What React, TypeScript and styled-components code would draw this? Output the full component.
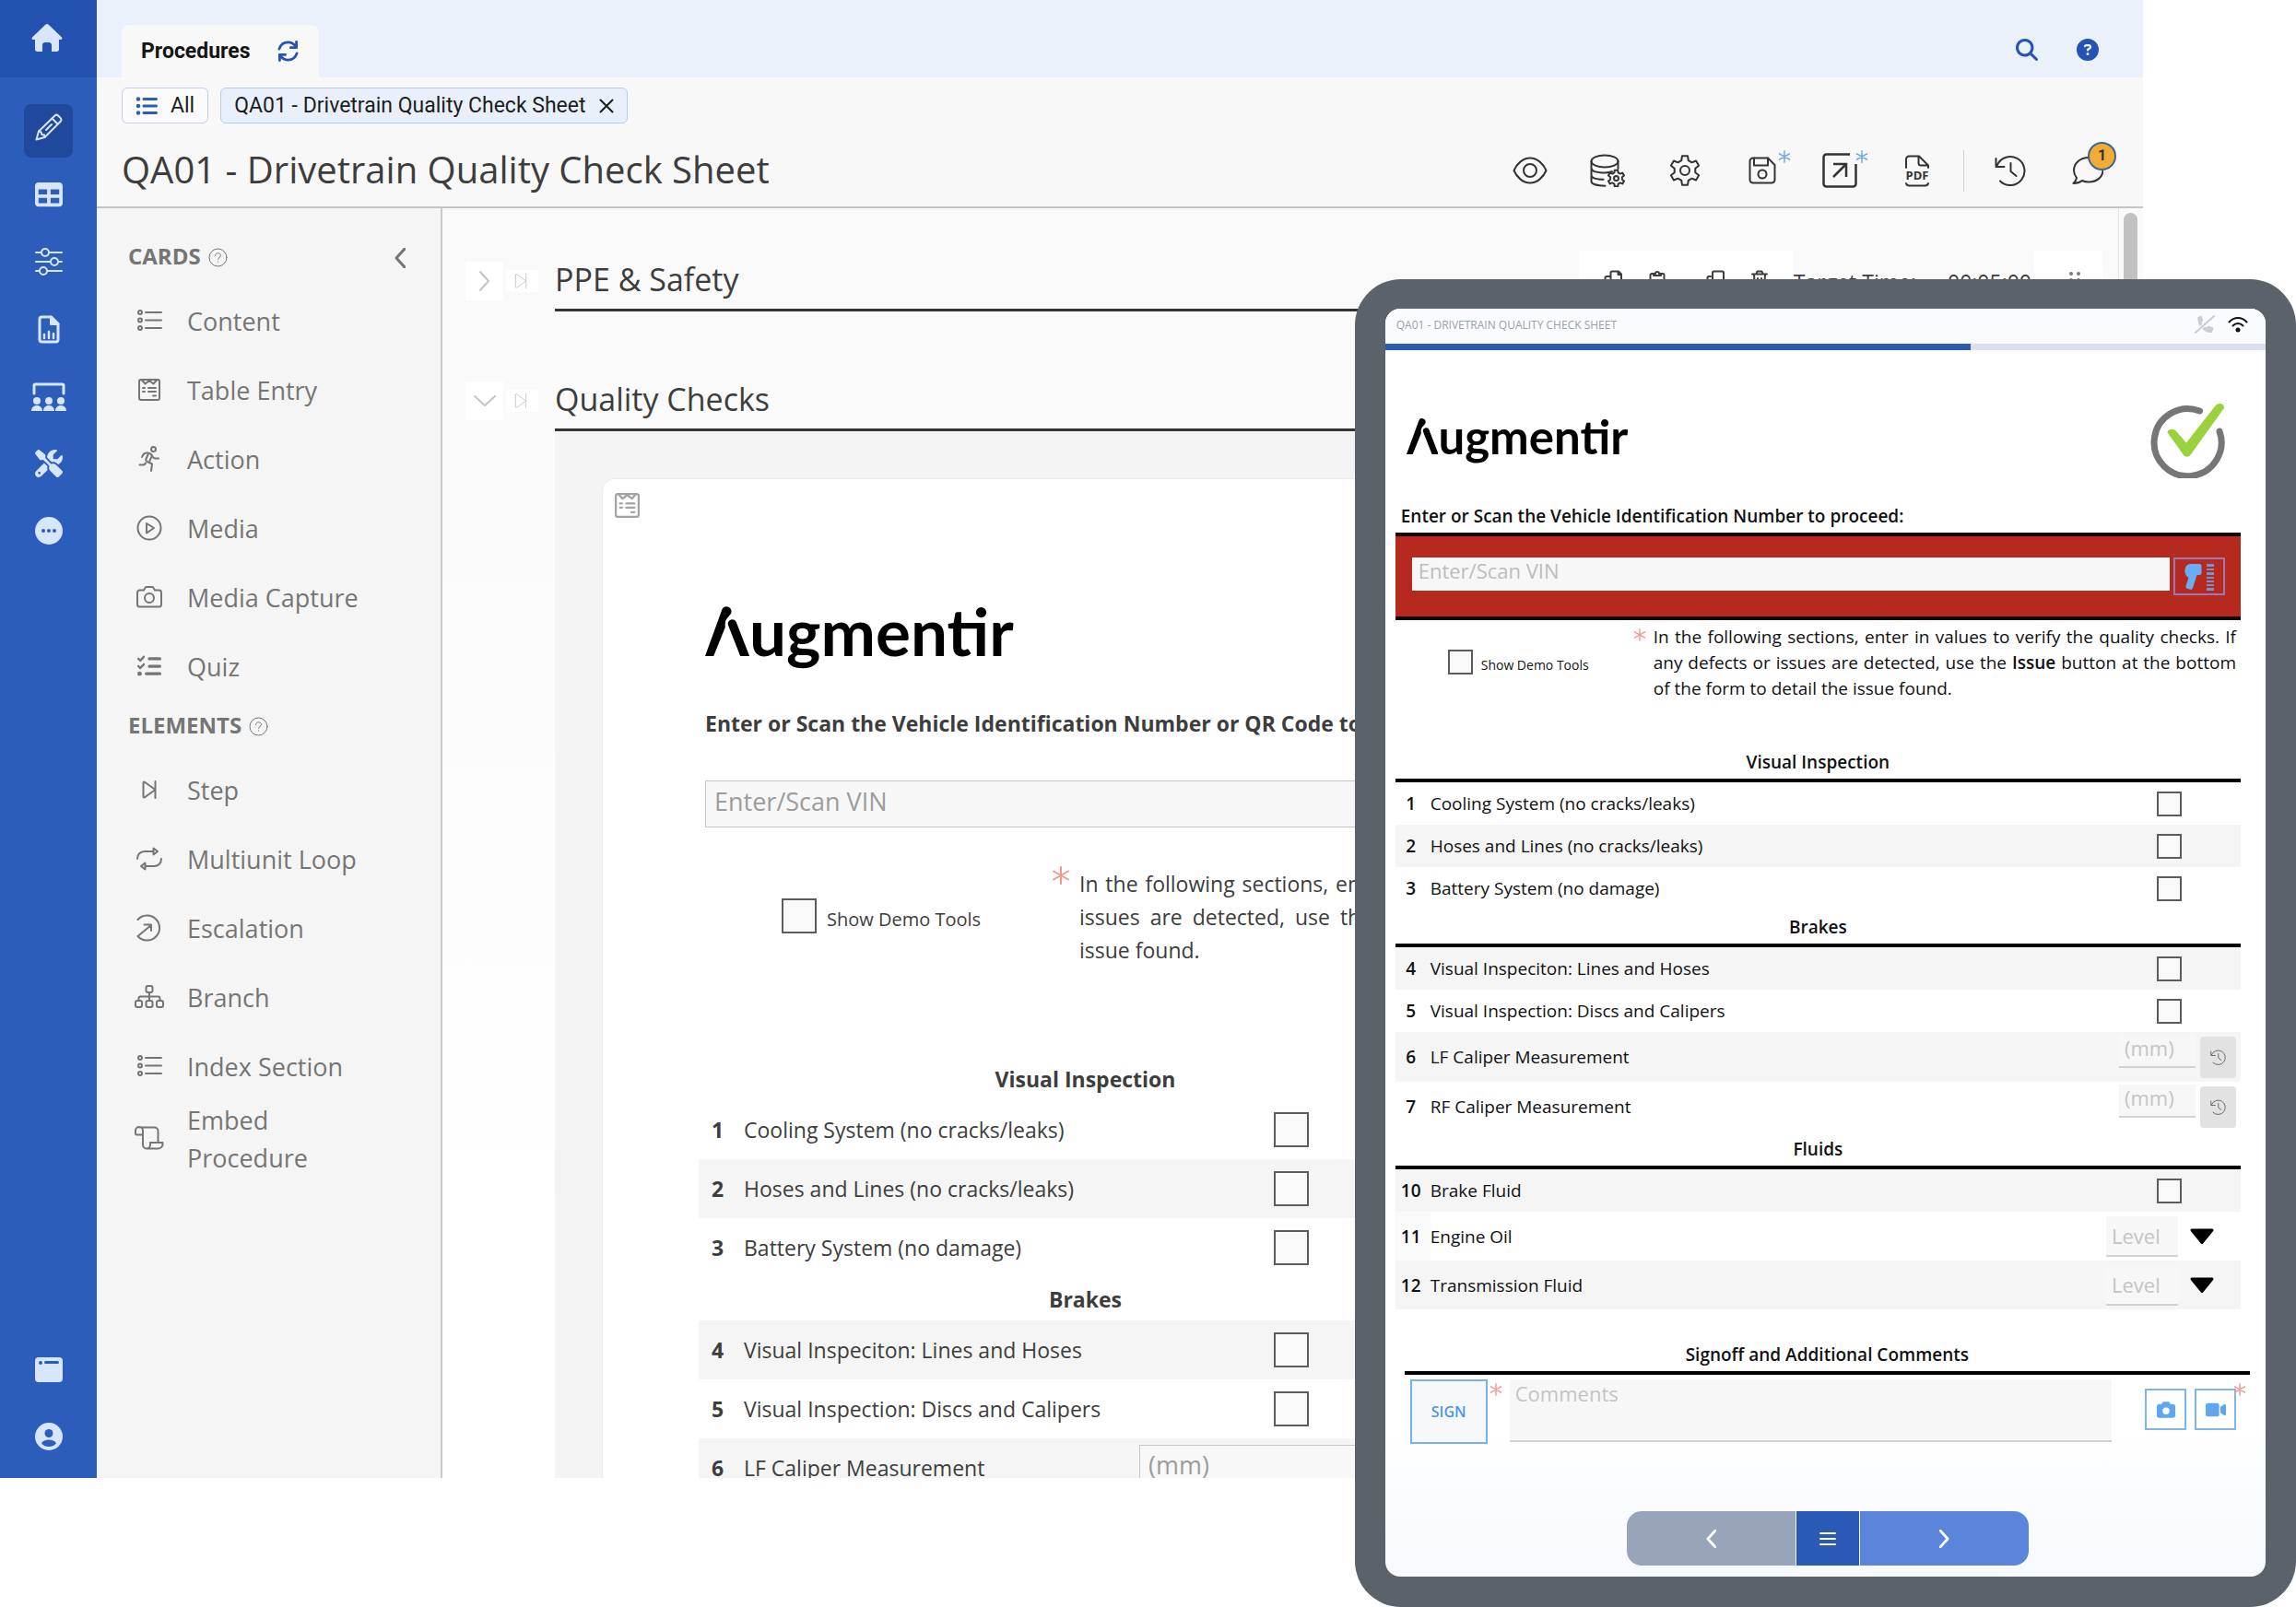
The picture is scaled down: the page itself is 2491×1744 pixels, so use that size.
import React from 'react';
import styled, { createGlobalStyle, css } from 'styled-components';
import {
  FaCamera,
  FaCircleQuestion,
  FaListCheck,
  FaListUl,
  FaMagnifyingGlass,
  FaScrewdriverWrench,
  FaTable,
  FaVideo,
} from 'react-icons/fa6';

const sans = `'Open Sans', 'Noto Sans', sans-serif`;
const roboto = `Roboto, 'Liberation Sans', sans-serif`;

const GlobalStyle = createGlobalStyle`
  *, *::before, *::after { box-sizing: border-box; }
  body { margin: 0; background: #ffffff; font-family: ${sans}; color: #3d3d3d; }
  button { font: inherit; color: inherit; padding: 0; border: 0; background: none; cursor: pointer; }
  h1, h2, h3, p, ul { margin: 0; padding: 0; }
  svg { display: block; flex: none; }
`;

/* ---------- icons ---------- */

type IconProps = { w: number; h?: number; box?: string; sw?: number; children: React.ReactNode };

const Line = ({ w, h = w, box, sw = 2, children }: IconProps) => (
  <svg
    width={w}
    height={h}
    viewBox={box ?? `0 0 ${w} ${h}`}
    fill="none"
    stroke="currentColor"
    strokeWidth={sw}
    strokeLinecap="round"
    strokeLinejoin="round"
    aria-hidden="true"
  >
    {children}
  </svg>
);

const gearPath = (cx: number, cy: number, outer: number, inner: number) => {
  const at = (deg: number, r: number) => {
    const a = (deg * Math.PI) / 180;
    return `${(cx + r * Math.cos(a)).toFixed(2)} ${(cy + r * Math.sin(a)).toFixed(2)}`;
  };
  const points: string[] = [];
  for (let tooth = 0; tooth < 6; tooth += 1) {
    const mid = -90 + tooth * 60;
    points.push(at(mid - 19, inner), at(mid - 11, outer), at(mid + 11, outer), at(mid + 19, inner));
  }
  return `M${points.join('L')}Z`;
};

const HomeIcon = () => (
  <svg width="34" height="30" viewBox="0 0 34 30" fill="currentColor" aria-hidden="true">
    <path d="M17 0c.7 0 1.200.2 1.700.7L33 14.500c1 1 .4 2.500-1 2.500h-2v10.500c0 1.400-1.100 2.500-2.500 2.500H22v-7c0-1.700-1.300-3-3-3h-4c-1.700 0-3 1.300-3 3v7H6.500C5.100 30 4 28.900 4 27.500V17H2c-1.400 0-2-1.500-1-2.500L15.300.7C15.800.2 16.300 0 17 0z" />
  </svg>
);
const PencilIcon = () => (
  <Line w={30} sw={2}>
    <path d="M1.500 28.500 4 19.500 21.500 2.500c1-1 2.600-1 3.600 0l2.600 2.600c1 1 1 2.600 0 3.600L10.500 26Z" />
    <path d="m4 19.500 2.500.7.800 2.800 2.800.6.500 2.400M18.500 5.500l6 6M12 18l6-6" />
  </Line>
);
const SlidersIcon = () => (
  <Line w={30} sw={2}>
    <path d="M1 5h6m8 0h14M1 15h16m8 0h4M1 25h4m8 0h16" />
    <circle cx="11" cy="5" r="4" />
    <circle cx="21" cy="15" r="4" />
    <circle cx="9" cy="25" r="4" />
  </Line>
);
const ReportIcon = () => (
  <Line w={24} h={31} sw={3}>
    <path d="M4.500 2h10L22 9.500v17a2.500 2.500 0 0 1-2.500 2.500h-15A2.500 2.500 0 0 1 2 26.500v-22A2.500 2.500 0 0 1 4.500 2z" />
    <path d="M14.500 2v7.500H22z" fill="currentColor" />
    <path d="M7 21v4M12 18v7M17 20v5" strokeWidth="2.500" />
  </Line>
);
const ClassIcon = () => (
  <Line w={38} h={31} sw={3}>
    <path d="M3 12V3.500C3 2.500 3.500 2 4.500 2h29c1 0 1.500.5 1.500 1.500V12" />
    <g fill="currentColor" stroke="none">
      <circle cx="6" cy="20" r="4" />
      <circle cx="19" cy="20" r="4" />
      <circle cx="32" cy="20" r="4" />
      <path d="M0 31c0-3.500 2.500-6 6-6s6 2.500 6 6zM13 31c0-3.500 2.500-6 6-6s6 2.500 6 6zM26 31c0-3.500 2.500-6 6-6s6 2.500 6 6z" />
    </g>
  </Line>
);
const MoreIcon = () => (
  <svg width="30" height="30" viewBox="0 0 30 30" aria-hidden="true">
    <circle cx="15" cy="15" r="15" fill="currentColor" />
    <g fill="#2d5dba">
      <circle cx="9" cy="15" r="2" />
      <circle cx="15" cy="15" r="2" />
      <circle cx="21" cy="15" r="2" />
    </g>
  </svg>
);
const WindowIcon = () => (
  <svg width="30" height="27" viewBox="0 0 30 27" aria-hidden="true">
    <rect width="30" height="27" rx="4" fill="currentColor" />
    <circle cx="6" cy="6" r="2" fill="#2d5dba" />
    <rect x="10" y="4" width="16" height="3" rx="1.500" fill="#2d5dba" />
  </svg>
);
const UserIcon = () => (
  <svg width="30" height="30" viewBox="0 0 30 30" aria-hidden="true">
    <circle cx="15" cy="15" r="15" fill="currentColor" />
    <circle cx="15" cy="11.500" r="4.500" fill="#2d5dba" />
    <path d="M7 22.500c1.500-3 4.500-4 8-4s6.500 1 8 4c-2 2.500-5 3.500-8 3.500s-6-1-8-3.500z" fill="#2d5dba" />
  </svg>
);
const RefreshIcon = () => (
  <Line w={23} box="0 0 24 24" sw={3}>
    <path d="M2 9.500C3.500 5 7.500 2 12 2c3.500 0 6.500 1.700 8.500 4.500M22 14.500C20.500 19 16.500 22 12 22c-3.500 0-6.500-1.700-8.500-4.500" />
    <path d="M21.500 1.500v6.500H15M2.500 22.500V16H9" />
  </Line>
);
const CloseIcon = () => (
  <Line w={16} sw={2}>
    <path d="m1.500 1.500 13 13m0-13-13 13" />
  </Line>
);
const EyeIcon = () => (
  <Line w={38} h={30} sw={2}>
    <path d="M1.500 15C4.500 8 11 1.500 19 1.500S33.500 8 36.500 15C33.500 22 27 28.500 19 28.500S4.500 22 1.500 15z" />
    <circle cx="19" cy="15" r="7" />
  </Line>
);
const DatabaseIcon = () => (
  <Line w={38} h={36} sw={2}>
    <ellipse cx="16" cy="8" rx="14.500" ry="6.500" />
    <path d="M1.500 8v22c0 2.500 6 4.500 15 4.800M30.500 8v8M1.500 15c0 3.500 6 5.500 15 5.500M1.500 23c0 3 5 4.600 13 4.800M16 20.500c3.500 0 6-.5 8-1.200" />
    <path d={gearPath(28.5, 26.5, 9, 6.5)} />
    <circle cx="28.500" cy="26.500" r="2.500" />
  </Line>
);
const GearIcon = () => (
  <Line w={34} h={34} sw={2}>
    <path d={gearPath(17, 17, 16, 11.5)} />
    <circle cx="17" cy="17" r="5" />
  </Line>
);
const SaveIcon = () => (
  <Line w={30} sw={2}>
    <path d="M5 1.500h16l7.500 7.500V25a3.500 3.500 0 0 1-3.500 3.500H5A3.500 3.500 0 0 1 1.500 25V5A3.500 3.500 0 0 1 5 1.500z" />
    <path d="M6 1.500V9.500h15V1.500" />
    <circle cx="15" cy="19" r="4.500" />
  </Line>
);
const PublishIcon = () => (
  <Line w={38} sw={2.5}>
    <path d="M30 1.500H4.500a3 3 0 0 0-3 3v29a3 3 0 0 0 3 3h29a3 3 0 0 0 3-3V12" strokeLinecap="butt" />
    <path d="M12 26 26 12M12 12h14v14" strokeLinecap="butt" strokeLinejoin="miter" />
  </Line>
);
const PdfGlyph = styled.text`
  font: 700 13px 'Open Sans', sans-serif;
  fill: currentColor;
  stroke: none;
`;
const PdfIcon = () => (
  <Line w={28} h={35} sw={2}>
    <path d="M2 14V5a3.500 3.500 0 0 1 3.500-3.500H16L26 11.500V14M15.500 1.500V9c0 1.500 1 2.500 2.500 2.500h8M2 31c.5 1.800 1.500 2.500 3.500 2.500h17c2 0 3-.7 3.500-2.500" />
    <PdfGlyph x="14" y="27" textAnchor="middle">PDF</PdfGlyph>
  </Line>
);
const HistoryIcon = ({ size = 34 }: { size?: number }) => (
  <Line w={size} box="0 0 34 34" sw={2}>
    <path d="M1.500 4v9h9M2.500 12A15.500 15.500 0 1 1 6 28.500" />
    <path d="M17.500 9v9l6 5" />
  </Line>
);
const ChatIcon = () => (
  <Line w={34} h={32} sw={2}>
    <path d="M18 2C9 2 2 8 2 16c0 3 1 5.500 3 8-.5 2.500-2 4.500-3.500 6 4 0 7-1 9.500-3 2 1 4.500 1.500 7 1.500 9 0 15.500-5.500 15.500-12.500S27 2 18 2z" />
  </Line>
);
const HelpOutline = () => (
  <Line w={21} sw={1}>
    <circle cx="10.500" cy="10.500" r="9.500" />
    <path d="M7.500 8.500c0-1.700 1.300-2.700 3-2.700s3 1 3 2.600c0 2-3 2-3 4M10.500 14.800v.3" />
  </Line>
);
const ChevronIcon = ({ dir, w = 12, sw = 3 }: { dir: 'left' | 'right' | 'down'; w?: number; sw?: number }) =>
  dir === 'down' ? (
    <Line w={w * 2} h={w} box="0 0 24 12" sw={sw}>
      <path d="m1 1 11 10L23 1" />
    </Line>
  ) : (
    <Line w={w} h={w * 2 - 2} box="0 0 12 22" sw={sw}>
      <path d={dir === 'left' ? 'M11 1 2 11l9 10' : 'm1 1 9 10-9 10'} />
    </Line>
  );

const BulletsIcon = () => (
  <Line w={27} h={23} sw={2}>
    <circle cx="3" cy="3" r="2" />
    <circle cx="3" cy="11.500" r="2" />
    <circle cx="3" cy="20" r="2" />
    <path d="M9 3h17M9 11.500h17M9 20h17" />
  </Line>
);
const TableEntryIcon = ({ w = 24 }: { w?: number }) => (
  <Line w={w} box="0 0 24 24" sw={2}>
    <rect x="1" y="1" width="22" height="22" rx="2" />
    <path d="M4 1.500 7.500 5.500 12 2l4.500 3.500L20 1.500" />
    <path d="M5 10h2M11 10h8M5 14h2M11 14h8M16 18.500h3" />
  </Line>
);
const RunIcon = () => (
  <Line w={24} h={28} sw={2}>
    <circle cx="16.500" cy="3.500" r="2.500" />
    <path d="M4 12c1-3 3-4.500 5.500-4.500 3 0 4.500.8 5.500 3 .8 2 2 3 3.500 3H22M11 8.500 8.500 14c-.6 1.300 0 2.300 1.200 3l5.300 2.500L14 27M14.500 11.500 12.500 16M1.500 20.500h4c1.200 0 1.800-.6 2.500-2" />
  </Line>
);
const PlayIcon = () => (
  <Line w={28} sw={2}>
    <circle cx="14" cy="14" r="12.500" />
    <path d="m11 9 8 5-8 5.500z" />
  </Line>
);
const CameraOutline = () => (
  <Line w={28} h={24} sw={2}>
    <path d="M3.500 4.500H8l1.500-2.600c.3-.6.8-.9 1.500-.9h6c.7 0 1.200.3 1.500.9L20 4.500h4.500A2.500 2.500 0 0 1 27 7v13a2.500 2.500 0 0 1-2.500 2.500h-21A2.500 2.500 0 0 1 1 20V7a2.500 2.500 0 0 1 2.500-2.500z" />
    <circle cx="14" cy="13" r="5" />
  </Line>
);
const StepIcon = ({ w = 16, sw = 2 }: { w?: number; sw?: number }) => (
  <Line w={w} h={w + 4} box="0 0 16 20" sw={sw}>
    <path d="M1.500 2.500v15c0 .8.800 1.200 1.500.7l10.500-7.500c.6-.4.600-1 0-1.400L3 1.800c-.7-.5-1.500-.1-1.500.7zM14.500 1v18" />
  </Line>
);
const LoopIcon = () => (
  <Line w={28} h={26} sw={2}>
    <path d="M1 13C1 8.500 4 5 9 5h9M27 13c0 4.500-3 8-8 8h-9" />
    <path d="M18.500 1.500v7L23 5zM9.500 17.500v7L5 21z" />
  </Line>
);
const EscalationIcon = () => (
  <Line w={30} sw={2}>
    <path d="M2.500 6A13.500 13.500 0 1 1 2.500 24M2.500 24 17 12M9.500 11.500H17V18" />
  </Line>
);
const BranchIcon = () => (
  <Line w={32} h={25} sw={2}>
    <rect x="12.500" y="1" width="7" height="7" rx="2" />
    <rect x="1" y="17" width="7" height="7" rx="2" />
    <rect x="12.500" y="17" width="7" height="7" rx="2" />
    <rect x="24" y="17" width="7" height="7" rx="2" />
    <path d="M16 8v9M4.500 17v-2.500a2 2 0 0 1 2-2h19a2 2 0 0 1 2 2V17" />
  </Line>
);
const ScrollIcon = () => (
  <Line w={32} h={26} sw={2}>
    <path d="M8 9.500H2.500A1.500 1.500 0 0 1 1 8V5a4 4 0 0 1 8 0v15.500a4 4 0 0 0 8 0V18h13.500c.5 4-1.500 6.500-5 6.500H13M5 1.500h16.500A4 4 0 0 1 25.500 5.500V18" />
  </Line>
);
const StarMark = ({ size }: { size: number }) => (
  <Line w={size} box="0 0 20 20" sw={2}>
    <path d="M10 1v18M2 5.500l16 9M18 5.500l-16 9" />
  </Line>
);
const CopyFileIcon = () => (
  <Line w={20} h={22} sw={2}>
    <path d="M9 1.500h7l3 3V15a1.500 1.500 0 0 1-1.500 1.500H9A1.500 1.500 0 0 1 7.500 15V3A1.500 1.500 0 0 1 9 1.500zM15.500 1.500V5H19M7 7H3a1.500 1.500 0 0 0-1.500 1.500v10A1.500 1.500 0 0 0 3 20h8" />
  </Line>
);
const ClipboardIcon = () => (
  <Line w={18} h={22} sw={2}>
    <path d="M5 4H3a1.500 1.500 0 0 0-1.500 1.500V19A1.500 1.500 0 0 0 3 20.500h12a1.500 1.500 0 0 0 1.500-1.500V5.500A1.500 1.500 0 0 0 15 4h-2M5 6V4h2a2 2 0 0 1 4 0h2v2z" />
  </Line>
);
const DuplicateIcon = () => (
  <Line w={20} h={22} sw={2}>
    <rect x="7" y="1.500" width="12" height="13" rx="1.500" />
    <path d="M5 7H3a1.500 1.500 0 0 0-1.500 1.500v10A1.500 1.500 0 0 0 3 20h9a1.500 1.500 0 0 0 1.500-1.500V17" />
  </Line>
);
const TrashIcon = () => (
  <Line w={18} h={22} sw={2}>
    <path d="M1 4.500h16M5.500 4l1-2.500h5l1 2.500M3 4.500l.8 14.500c0 1 .7 1.500 1.500 1.500h7.400c.8 0 1.500-.5 1.500-1.500L15 4.500M7 9v8M11 9v8" />
  </Line>
);
const GripIcon = () => (
  <svg width="14" height="22" viewBox="0 0 14 22" fill="#7a7a7a" aria-hidden="true">
    {[4, 11, 18].map((y) => (
      <React.Fragment key={y}>
        <circle cx="3" cy={y} r="2" />
        <circle cx="11" cy={y} r="2" />
      </React.Fragment>
    ))}
  </svg>
);
const OfflineCallIcon = () => (
  <Line w={22} h={20} sw={1}>
    <path
      d="M4 2.500 7 1l2 4.500-2 2c1 3 3 5 6 6.500l2-2 5 2-1.500 4.500C11 19.500 2.500 11 4 2.500z"
      fill="currentColor"
    />
    <path d="M21 1 1 19" stroke="#fafbff" strokeWidth="4" />
    <path d="M21 1 1 19" strokeWidth="2" />
  </Line>
);
const WifiIcon = () => (
  <Line w={22} h={18} sw={2}>
    <path d="M1.500 6.500C7 .5 15 .5 20.500 6.500M5.500 10.500c3.200-3.300 7.800-3.300 11 0" />
    <circle cx="11" cy="15" r="1.500" fill="currentColor" />
  </Line>
);
const ScannerIcon = () => (
  <svg width="34" height="30" viewBox="0 0 34 30" fill="currentColor" aria-hidden="true">
    <path d="M2 5c1-2.500 3-4 6-4h9c1.500 0 2.500.8 2.500 2v8c0 1.200-1 2-2.500 2h-2.500L10 27c-.4 1.300-1.300 2-2.500 1.700l-3-.8C3 27.500 2 26.500 2.500 25l3-9C2 14 .5 9 2 5z" />
    <path
      d="M25 1h8v3h-8zM25 6h8v2h-8zM25 10h8v3h-8zM25 15h8v2h-8zM25 19h8v2h-8zM25 23h8v2h-8zM25 27h8v3h-8z"
      opacity="0.8"
    />
  </svg>
);
const ArrowDown = () => (
  <svg width="28" height="18" viewBox="0 0 28 18" aria-hidden="true">
    <path d="M3 2h22L14 15.500z" fill="#000" stroke="#000" strokeWidth="3" strokeLinejoin="round" />
  </svg>
);
const CheckBadge = () => (
  <svg width="82" height="82" viewBox="0 0 82 82" fill="none" aria-hidden="true">
    <path d="M54.500 9A36.500 36.500 0 1 0 76 31" stroke="#767676" strokeWidth="7" strokeLinecap="round" />
    <path
      d="M21 32c1-2.500 5-2.500 7 0l12 14L73 4c2-2.500 6.500-2 6.500 1.500L44 55c-2 3-5 3-6.500 0z"
      fill="#9bd13c"
      stroke="#9bd13c"
      strokeWidth="3"
      strokeLinejoin="round"
    />
  </svg>
);

/* ---------- brand ---------- */

const Brand = styled.div<{ $compact?: boolean }>`
  display: flex;
  align-items: baseline;
  color: #000;
  font-family: Lato, sans-serif;
  font-weight: 700;
  font-size: ${(p) => (p.$compact ? 51 : 71)}px;
  line-height: ${(p) => (p.$compact ? 40 : 55)}px;
  padding-bottom: ${(p) => (p.$compact ? 8 : 15)}px;
  svg { height: ${(p) => (p.$compact ? 39 : 54)}px; width: auto; }
`;
const Logo = ({ compact }: { compact?: boolean }) => (
  <Brand $compact={compact} role="img" aria-label="Augmentir">
    <svg viewBox="30 50 146 164" fill="#000" aria-hidden="true">
      <path d="M30 214 86 60a16 16 0 1 1 29 14L102 90c-6 7-6 14-6 24v6L58 214z" />
      <path d="M106 112a14 14 0 0 1 27-9l43 111h-30z" />
    </svg>
    <span>ugmentir</span>
  </Brand>
);

/* ---------- frame ---------- */

const Scene = styled.div`
  position: relative;
  min-height: 100vh;
  display: flex;
  flex-direction: column;
`;
const Desktop = styled.div`
  display: flex;
  width: calc(100% - 166px);
  height: calc(100vh - 140px);
  overflow: hidden;
`;
const Rail = styled.nav`
  flex: 0 0 105px;
  display: flex;
  flex-direction: column;
  background: #2d5dba;
  color: #d8e6fd;
`;
const RailHome = styled.a`
  height: 84px;
  display: flex;
  align-items: center;
  justify-content: center;
  padding: 0 3px 2px 0;
  background: #2351b0;
  color: inherit;
  margin-bottom: 29px;
`;
const RailGroup = styled.div<{ $bottom?: boolean }>`
  display: flex;
  flex-direction: column;
  align-items: center;
  gap: 15px;
  ${(p) => p.$bottom && css`
    margin-top: auto;
    padding-bottom: 12px;
  `}
`;
const RailLink = styled.a<{ $active?: boolean }>`
  width: 53px;
  height: 58px;
  padding-bottom: 8px;
  border-radius: 8px;
  display: flex;
  align-items: center;
  justify-content: center;
  color: inherit;
  background: ${(p) => (p.$active ? '#20489c' : 'transparent')};
`;
const Workspace = styled.div`
  flex: 1;
  min-width: 0;
  display: flex;
  flex-direction: column;
  background: #f8f8f8;
`;
const TopBar = styled.header`
  flex: none;
  display: flex;
  justify-content: space-between;
  align-items: flex-end;
  height: 84px;
  padding: 0 48px 0 27px;
  background: #eaf1fa;
`;
const Tab = styled.div`
  display: flex;
  align-items: center;
  gap: 29px;
  height: 57px;
  padding: 0 22px 0 21px;
  border-radius: 8px 8px 0 0;
  background: #f8f8f8;
  font: 700 23px ${roboto};
  color: #151515;
  button { color: #2453b5; }
`;
const TopActions = styled.div`
  display: flex;
  align-items: center;
  gap: 42px;
  height: 60px;
  color: #2453b5;
`;
const TitleArea = styled.div`
  flex: none;
  padding: 11px 38px 9px 27px;
  border-bottom: 2px solid #c4c4c4;
`;
const Chips = styled.div`
  display: flex;
  gap: 13px;
`;
const Chip = styled.button<{ $selected?: boolean }>`
  display: flex;
  align-items: center;
  gap: 14px;
  height: 39px;
  padding: 0 14px;
  border: 1px solid ${(p) => (p.$selected ? '#b9cbea' : '#c3cfe6')};
  border-radius: 6px;
  background: ${(p) => (p.$selected ? '#e9f0fb' : '#fbfbfb')};
  font: 400 23px ${roboto};
  color: #1d1d1d;
`;
const BlueMark = styled.span`
  display: flex;
  color: #2d5dba;
`;
const TitleRow = styled.div`
  display: flex;
  align-items: center;
  justify-content: space-between;
  margin-top: 21px;
  height: 60px;
`;
const PageTitle = styled.h1`
  font-size: 40px;
  font-weight: 400;
  line-height: 58px;
  padding-bottom: 2px;
  white-space: nowrap;
`;
const Toolbar = styled.div`
  display: flex;
  align-items: center;
  color: #333;
`;
const ToolGroup = styled.div`
  display: flex;
  gap: 40px;
`;
const Divider = styled.span`
  width: 1px;
  height: 45px;
  margin: 0 28px;
  background: #cfcfcf;
`;
const Tool = styled.button`
  position: relative;
  width: 44px;
  height: 44px;
  display: flex;
  align-items: center;
  justify-content: center;
`;
const ToolStar = styled.span`
  position: absolute;
  top: 0;
  right: -9px;
  color: #5fa3ee;
`;
const CountBadge = styled.span`
  position: absolute;
  top: -9px;
  right: -9px;
  width: 31px;
  height: 31px;
  border-radius: 50%;
  border: 2px solid #3c6494;
  background: #f2ab35;
  font: 700 16px/26px ${roboto};
  text-align: center;
`;
const Body = styled.div`
  flex: 1;
  min-height: 0;
  display: flex;
`;

/* ---------- card palette ---------- */

const Palette = styled.aside`
  flex: 0 0 375px;
  padding: 26px 30px 0 34px;
  background: #f5f5f5;
  border-right: 2px solid #c9c9c9;
  color: #757575;
`;
const PaletteHead = styled.div`
  display: flex;
  align-items: center;
  gap: 8px;
  height: 36px;
  margin: 9px 0 14px;
  h2 { font-size: 24px; font-weight: 700; line-height: 34px; padding-bottom: 2px; }
  > button:last-child { margin-left: auto; padding: 2px 8px 0; }
`;
const PaletteList = styled.ul`
  list-style: none;
`;
const PaletteItem = styled.button`
  display: grid;
  grid-template-columns: 46px 200px;
  align-items: center;
  gap: 18px;
  height: 75px;
  font-size: 27px;
  line-height: 41px;
  text-align: left;
  > span:first-child { display: flex; justify-content: center; padding-bottom: 2px; }
`;

/* ---------- editor ---------- */

const Editor = styled.main`
  flex: 1;
  min-width: 0;
  display: flex;
  flex-direction: column;
  gap: 64px;
  padding: 46px 17px 0 25px;
  background: linear-gradient(#f9f9f9, #ffffff 80%);
  overflow: hidden;
`;
const Section = styled.section`
  display: grid;
  grid-template-columns: 97px minmax(0, 1fr);
`;
const SectionHandles = styled.div`
  display: flex;
  align-items: center;
  gap: 3px;
  height: 66px;
  color: #c4c4c4;
`;
const Handle = styled.button<{ $small?: boolean }>`
  display: flex;
  align-items: center;
  justify-content: center;
  width: ${(p) => (p.$small ? 35 : 41)}px;
  height: ${(p) => (p.$small ? 24 : 42)}px;
  padding-right: ${(p) => (p.$small ? 4 : 0)}px;
  background: #fff;
`;
const SectionHead = styled.div`
  display: flex;
  align-items: center;
  height: 66px;
  border-bottom: 3px solid #343434;
  h2 { flex: 1; font-size: 34px; font-weight: 400; padding-bottom: 2px; white-space: nowrap; }
`;
const SectionTools = styled.div`
  display: flex;
  align-items: center;
  width: 233px;
  height: 63px;
  padding-left: 13px;
  background: #fff;
  button {
    display: flex;
    justify-content: center;
    width: 48px;
  }
  button:nth-child(3) { margin-left: 15px; }
`;
const TargetTime = styled.div`
  display: flex;
  gap: 34px;
  padding: 4px 2px 0 0;
  font-size: 23px;
`;
const DragBox = styled.button`
  width: 75px;
  height: 63px;
  display: flex;
  align-items: center;
  justify-content: center;
  padding-left: 14px;
  background: #fff;
`;
const SectionBody = styled.div`
  grid-column: 2;
  padding: 51px;
  background: #f4f4f4;
`;
const Card = styled.div`
  position: relative;
  padding: 137px 111px 200px;
  border: 1px solid #ececec;
  border-width: 1px 0 0 1px;
  border-radius: 14px;
  background: #fff;
`;
const CardKind = styled.span`
  position: absolute;
  top: 15px;
  left: 13px;
  color: #a3a3a3;
`;
const Scroller = styled.div`
  flex: 0 0 27px;
  padding: 5px 5px;
  border-left: 1px solid #e4e4e4;
  background: #fafafa;
`;
const Thumb = styled.div`
  height: 480px;
  width: 15px;
  border-radius: 8px;
  background: #c1c1c1;
`;

/* ---------- form parts used in both views ---------- */

const Check = styled.input.attrs({ type: 'checkbox' })<{ $large?: boolean }>`
  appearance: none;
  flex: none;
  display: block;
  margin: 0;
  width: ${(p) => (p.$large ? 38 : 27)}px;
  height: ${(p) => (p.$large ? 38 : 27)}px;
  border: 2px solid #5c5c5c;
  background: #f9f9f9;
`;
const FormPrompt = styled.label<{ $compact?: boolean }>`
  display: block;
  font-weight: ${(p) => (p.$compact ? 600 : 700)};
  font-size: ${(p) => (p.$compact ? 19 : 23)}px;
  line-height: ${(p) => (p.$compact ? 28 : 36)}px;
  margin: ${(p) => (p.$compact ? '28px 0 4px 6px' : '40px 0 44px')};
  white-space: nowrap;
`;
const VinInput = styled.input`
  display: block;
  width: 100%;
  height: 51px;
  padding: 0 9px 7px;
  border: 1px solid #c6c6c6;
  background: #f7f7f7;
  font: 400 27px ${sans};
  &::placeholder { color: #9c9c9c; opacity: 1; }
`;
const Guidance = styled.div<{ $compact?: boolean }>`
  display: grid;
  align-items: center;
  grid-template-columns: ${(p) => (p.$compact ? '280px minmax(0, 1fr)' : '406px minmax(0, 930px)')};
  margin: ${(p) => (p.$compact ? '4px 5px 0 0' : '43px 0 1px')};
`;
const DemoToggle = styled.label<{ $compact?: boolean }>`
  display: flex;
  align-items: center;
  gap: ${(p) => (p.$compact ? 9 : 11)}px;
  padding-left: ${(p) => (p.$compact ? 57 : 83)}px;
  padding-bottom: 2px;
  font-size: ${(p) => (p.$compact ? 14 : 20)}px;
  > span { padding-top: 6px; }
`;
const GuidanceText = styled.p<{ $compact?: boolean }>`
  position: relative;
  text-align: justify;
  font-size: ${(p) => (p.$compact ? 19 : 23)}px;
  line-height: ${(p) => (p.$compact ? 28 : 36)}px;
  b { font-weight: 600; }
`;
const KeepTogether = styled.span`
  white-space: nowrap;
`;
const RequiredMark = styled.span<{ $top: number; $left?: number; $right?: number }>`
  position: absolute;
  top: ${(p) => p.$top}px;
  ${(p) => (p.$left !== undefined ? `left: ${p.$left}px;` : `right: ${p.$right}px;`)}
  color: #f0988f;
`;
const Checklist = styled.table<{ $compact?: boolean }>`
  border-collapse: separate;
  border-spacing: 0;
  table-layout: fixed;
  width: ${(p) => (p.$compact ? '100%' : '839px')};
  margin: ${(p) => (p.$compact ? '47px 0 0' : '98px 0 0 -7px')};
  font-size: ${(p) => (p.$compact ? 19 : 23)}px;
  td, th { padding: 0; }
`;
const NumCol = styled.col<{ $compact?: boolean }>`
  width: ${(p) => (p.$compact ? 38 : 49)}px;
`;
const ControlCol = styled.col<{ $compact?: boolean }>`
  width: ${(p) => (p.$compact ? 154 : 361)}px;
`;
const GroupHead = styled.th<{ $compact?: boolean }>`
  height: ${(p) => (p.$compact ? 41 : 47)}px;
  font-weight: ${(p) => (p.$compact ? 600 : 700)};
  border-bottom: ${(p) => (p.$compact ? '4px solid #000' : '0')};
`;
const Row = styled.tr<{ $shaded?: boolean; $h: number; $numShaded?: boolean }>`
  height: ${(p) => p.$h}px;
  background: ${(p) => (p.$shaded ? '#f5f5f5' : 'transparent')};
  ${(p) => p.$numShaded && css`
    > th { background: #fafafa; }
  `}
`;
const Num = styled.th<{ $compact?: boolean }>`
  font-weight: ${(p) => (p.$compact ? 600 : 700)};
  text-align: center;
  > span { display: block; padding-right: ${(p) => (p.$compact ? 4 : 8)}px; }
`;
const Controls = styled.div<{ $end: number; $gap: number; $center?: boolean }>`
  display: flex;
  align-items: center;
  justify-content: ${(p) => (p.$center ? 'center' : 'flex-end')};
  gap: ${(p) => p.$gap}px;
  padding-right: ${(p) => p.$end}px;
`;
const WideMeasure = styled.input`
  width: 100%;
  height: 51px;
  padding: 0 9px 7px;
  border: 1px solid #c6c6c6;
  background: #f8f8f8;
  font: 400 27px ${sans};
  &::placeholder { color: #9c9c9c; opacity: 1; }
`;
const underlined = css`
  border: 0;
  border-bottom: 2px solid #d2d2d2;
  border-radius: 0;
  background: #f7f7f7;
  font: 400 22px ${sans};
  color: #c4c4c4;
  &::placeholder { color: #c4c4c4; opacity: 1; }
`;
const SmallMeasure = styled.input`
  ${underlined}
  width: 83px;
  height: 36px;
  padding: 0 6px 6px;
  margin-bottom: 12px;
`;
const HistoryButton = styled.button`
  width: 39px;
  height: 45px;
  border-radius: 4px;
  background: #e2e2e2;
  display: flex;
  align-items: center;
  justify-content: center;
  color: #6c6c6c;
`;
const LevelSelect = styled.select`
  ${underlined}
  appearance: none;
  width: 78px;
  height: 44px;
  padding: 0 6px;
`;

/* ---------- tablet ---------- */

const Tablet = styled.aside`
  position: absolute;
  top: 303px;
  right: 0;
  bottom: 0;
  width: 41%;
  min-width: 960px;
  padding: 32px 33px 33px;
  border-radius: 50px;
  background: #5b626a;
  display: flex;
`;
const Screen = styled.div`
  flex: 1;
  min-width: 0;
  display: flex;
  flex-direction: column;
  overflow: hidden;
  border-radius: 16px;
  background: linear-gradient(#ffffff 88%, #f6f9fe);
  color: #111;
`;
const StatusBar = styled.div`
  display: flex;
  align-items: center;
  justify-content: space-between;
  height: 38px;
  padding: 0 19px 4px 12px;
  background: #fafbff;
  font-size: 12px;
  color: #98a0ad;
  > div { display: flex; align-items: center; gap: 14px; color: #c9cdd6; }
`;
const Dark = styled.span`
  color: #111;
`;
const Progress = styled.div`
  height: 7px;
  background: #dcdfec;
  > div { height: 100%; background: #2d5ab4; }
`;
const Sheet = styled.div`
  padding: 58px 27px 0 11px;
`;
const BrandRow = styled.div`
  display: flex;
  align-items: center;
  justify-content: space-between;
  height: 80px;
  padding: 0 17px 0 12px;
`;
const VinBand = styled.div`
  display: flex;
  align-items: flex-start;
  gap: 4px;
  padding: 23px 17px 23px 18px;
  border: solid #120505;
  border-width: 4px 0;
  background: #b5291f;
`;
const VinField = styled.input`
  flex: 1;
  min-width: 0;
  height: 36px;
  padding: 0 7px 8px;
  border: 0;
  background: #f7f7f7;
  font: 400 22px ${sans};
  &::placeholder { color: #bdbdbd; opacity: 1; }
`;
const ScanButton = styled.button`
  width: 56px;
  height: 41px;
  border: 2px solid #9b79b4;
  display: flex;
  align-items: center;
  justify-content: center;
  color: #6aadf6;
`;
const Signoff = styled.section`
  margin: 30px 17px 0 21px;
  h3 {
    height: 41px;
    line-height: 38px;
    font-size: 19px;
    font-weight: 600;
    text-align: center;
    border-bottom: 4px solid #000;
  }
`;
const SignRow = styled.div`
  position: relative;
  display: flex;
  align-items: flex-start;
  padding: 5px 15px 0 6px;
`;
const SignButton = styled.button`
  width: 84px;
  height: 70px;
  border: 2px solid #76b2ec;
  background: #f7f8f9;
  font-size: 16px;
  font-weight: 600;
  color: #4b97e6;
`;
const Comments = styled.textarea`
  ${underlined}
  flex: 1;
  min-width: 0;
  height: 68px;
  margin: 0 36px 0 24px;
  padding: 0 6px;
  resize: none;
  outline: 0;
`;
const MediaButton = styled.button`
  width: 45px;
  height: 45px;
  margin: 10px 0 0;
  border: 2px solid #7db6ee;
  background: #fff;
  display: flex;
  align-items: center;
  justify-content: center;
  color: #5fa6ef;
  & + & { margin-left: 9px; }
`;
const StepNav = styled.div`
  display: flex;
  justify-content: center;
  gap: 1px;
  margin-top: auto;
  padding: 0 0 12px 5px;
  color: #fff;
`;
const StepButton = styled.button<{ $kind: 'prev' | 'menu' | 'next' }>`
  width: ${(p) => (p.$kind === 'menu' ? 68 : 183)}px;
  height: 59px;
  display: flex;
  align-items: center;
  justify-content: center;
  background: ${(p) => ({ prev: '#98a4ba', menu: '#2a59b8', next: '#5a85da' })[p.$kind]};
  border-radius: ${(p) => ({ prev: '16px 0 0 16px', menu: '0', next: '0 16px 16px 0' })[p.$kind]};
`;

/* ---------- data ---------- */

const railItems = [
  { name: 'Procedures', icon: <PencilIcon />, active: true },
  { name: 'Tables', icon: <FaTable size={30} /> },
  { name: 'Settings', icon: <SlidersIcon /> },
  { name: 'Reports', icon: <ReportIcon /> },
  { name: 'Teams', icon: <ClassIcon /> },
  { name: 'Tools', icon: <FaScrewdriverWrench size={30} /> },
  { name: 'More', icon: <MoreIcon /> },
];
const cards = [
  { name: 'Content', icon: <BulletsIcon /> },
  { name: 'Table Entry', icon: <TableEntryIcon /> },
  { name: 'Action', icon: <RunIcon /> },
  { name: 'Media', icon: <PlayIcon /> },
  { name: 'Media Capture', icon: <CameraOutline /> },
  { name: 'Quiz', icon: <FaListCheck size={26} /> },
];
const elements = [
  { name: 'Step', icon: <StepIcon /> },
  { name: 'Multiunit Loop', icon: <LoopIcon /> },
  { name: 'Escalation', icon: <EscalationIcon /> },
  { name: 'Branch', icon: <BranchIcon /> },
  { name: 'Index Section', icon: <BulletsIcon /> },
  { name: 'Embed Procedure', icon: <ScrollIcon /> },
];

type Kind = 'check' | 'measure' | 'level';
type Item = { n: number; label: string; kind: Kind; shaded?: boolean };
type Group = { title: string; items: Item[] };

const inspection: Group = {
  title: 'Visual Inspection',
  items: [
    { n: 1, label: 'Cooling System (no cracks/leaks)', kind: 'check' },
    { n: 2, label: 'Hoses and Lines (no cracks/leaks)', kind: 'check', shaded: true },
    { n: 3, label: 'Battery System (no damage)', kind: 'check' },
  ],
};
const brakes: Group = {
  title: 'Brakes',
  items: [
    { n: 4, label: 'Visual Inspeciton: Lines and Hoses', kind: 'check', shaded: true },
    { n: 5, label: 'Visual Inspection: Discs and Calipers', kind: 'check' },
    { n: 6, label: 'LF Caliper Measurement', kind: 'measure', shaded: true },
    { n: 7, label: 'RF Caliper Measurement', kind: 'measure' },
  ],
};
const fluids: Group = {
  title: 'Fluids',
  items: [
    { n: 10, label: 'Brake Fluid', kind: 'check', shaded: true },
    { n: 11, label: 'Engine Oil', kind: 'level' },
    { n: 12, label: 'Transmission Fluid', kind: 'level', shaded: true },
  ],
};

/* ---------- composed views ---------- */

const PaletteGroup = ({ title, items, closable }: { title: string; items: typeof cards; closable?: boolean }) => (
  <>
    <PaletteHead>
      <h2>{title}</h2>
      <HelpOutline />
      {closable && (
        <button aria-label="Collapse panel">
          <ChevronIcon dir="left" />
        </button>
      )}
    </PaletteHead>
    <PaletteList>
      {items.map((item) => (
        <li key={item.name}>
          <PaletteItem>
            <span>{item.icon}</span>
            <span>{item.name}</span>
          </PaletteItem>
        </li>
      ))}
    </PaletteList>
  </>
);

const SectionBlock = ({ title, open, children }: { title: string; open?: boolean; children?: React.ReactNode }) => (
  <Section>
    <SectionHandles>
      <Handle aria-label="Toggle section">
        <ChevronIcon dir={open ? 'down' : 'right'} sw={2} />
      </Handle>
      <Handle $small aria-label="Step">
        <StepIcon w={14} sw={1} />
      </Handle>
    </SectionHandles>
    <SectionHead>
      <h2>{title}</h2>
      <SectionTools>
        <button aria-label="Copy"><CopyFileIcon /></button>
        <button aria-label="Paste"><ClipboardIcon /></button>
        <button aria-label="Duplicate"><DuplicateIcon /></button>
        <button aria-label="Delete"><TrashIcon /></button>
      </SectionTools>
      <TargetTime>
        <span>Target Time:</span>
        <span>00:05:00</span>
      </TargetTime>
      <DragBox aria-label="Move section"><GripIcon /></DragBox>
    </SectionHead>
    {children && <SectionBody>{children}</SectionBody>}
  </Section>
);

const Control = ({ item, compact, id }: { item: Item; compact?: boolean; id: string }) => {
  if (item.kind === 'check') {
    return (
      <Controls $end={compact ? 64 : 30} $gap={0} $center={!compact}>
        <Check id={id} $large={!compact} />
      </Controls>
    );
  }
  if (item.kind === 'level') {
    return (
      <Controls $end={28} $gap={12}>
        <LevelSelect id={id} defaultValue="">
          <option value="">Level</option>
          <option value="low">Low</option>
          <option value="full">Full</option>
        </LevelSelect>
        <ArrowDown />
      </Controls>
    );
  }
  return compact ? (
    <Controls $end={5} $gap={5}>
      <SmallMeasure id={id} placeholder="(mm)" />
      <HistoryButton aria-label="Measurement history"><HistoryIcon size={17} /></HistoryButton>
    </Controls>
  ) : (
    <Controls $end={0} $gap={0}>
      <WideMeasure id={id} placeholder="(mm)" />
    </Controls>
  );
};

const compactHeights: Record<Kind, number> = { check: 46, measure: 54, level: 53 };

const FormTable = ({ groups, compact }: { groups: Group[]; compact?: boolean }) => (
  <Checklist $compact={compact}>
    <colgroup>
      <NumCol $compact={compact} />
      <col />
      <ControlCol $compact={compact} />
    </colgroup>
    {groups.map((group) => (
      <tbody key={group.title}>
        <tr>
          <GroupHead $compact={compact} colSpan={3}>{group.title}</GroupHead>
        </tr>
        {group.items.map((item) => {
          const id = `${compact ? 'tablet' : 'editor'}-item-${item.n}`;
          return (
            <Row
              key={item.n}
              $shaded={item.shaded}
              $numShaded={item.kind === 'level' && !item.shaded}
              $h={compact ? compactHeights[item.kind] : 64}
            >
              <Num $compact={compact} scope="row"><span>{item.n}</span></Num>
              <td><label htmlFor={id}>{item.label}</label></td>
              <td><Control item={item} compact={compact} id={id} /></td>
            </Row>
          );
        })}
      </tbody>
    ))}
  </Checklist>
);

const GuidanceBlock = ({ compact }: { compact?: boolean }) => (
  <Guidance $compact={compact}>
    <DemoToggle $compact={compact}>
      <Check $large={!compact} />
      <span>Show Demo Tools</span>
    </DemoToggle>
    <GuidanceText $compact={compact}>
      <RequiredMark $top={compact ? 5 : -1} $left={compact ? -22 : -30}>
        <StarMark size={compact ? 14 : 20} />
      </RequiredMark>
      In the following sections, enter in values to verify the quality checks. If any defects or issues are
      detected, use the <b>Issue</b> button at the bottom of the form to detail the{' '}
      <KeepTogether>issue found.</KeepTogether>
    </GuidanceText>
  </Guidance>
);

const DesktopApp = () => (
  <Desktop>
    <Rail aria-label="Main">
      <RailHome href="#home" aria-label="Home"><HomeIcon /></RailHome>
      <RailGroup>
        {railItems.map((item) => (
          <RailLink key={item.name} href={`#${item.name.toLowerCase()}`} aria-label={item.name} $active={item.active}>
            {item.icon}
          </RailLink>
        ))}
      </RailGroup>
      <RailGroup $bottom>
        <RailLink href="#windows" aria-label="Windows"><WindowIcon /></RailLink>
        <RailLink href="#account" aria-label="Account"><UserIcon /></RailLink>
      </RailGroup>
    </Rail>
    <Workspace>
      <TopBar>
        <Tab>
          Procedures
          <button aria-label="Refresh"><RefreshIcon /></button>
        </Tab>
        <TopActions>
          <button aria-label="Search"><FaMagnifyingGlass size={24} /></button>
          <button aria-label="Help"><FaCircleQuestion size={24} /></button>
        </TopActions>
      </TopBar>
      <TitleArea>
        <Chips>
          <Chip><BlueMark><FaListUl size={24} /></BlueMark>All</Chip>
          <Chip $selected>QA01 - Drivetrain Quality Check Sheet<CloseIcon /></Chip>
        </Chips>
        <TitleRow>
          <PageTitle>QA01 - Drivetrain Quality Check Sheet</PageTitle>
          <Toolbar>
            <ToolGroup>
              <Tool aria-label="Preview"><EyeIcon /></Tool>
              <Tool aria-label="Data settings"><DatabaseIcon /></Tool>
              <Tool aria-label="Settings"><GearIcon /></Tool>
              <Tool aria-label="Save"><SaveIcon /><ToolStar><StarMark size={14} /></ToolStar></Tool>
              <Tool aria-label="Publish"><PublishIcon /><ToolStar><StarMark size={14} /></ToolStar></Tool>
              <Tool aria-label="Export PDF"><PdfIcon /></Tool>
            </ToolGroup>
            <Divider />
            <ToolGroup>
              <Tool aria-label="History"><HistoryIcon /></Tool>
              <Tool aria-label="Comments"><ChatIcon /><CountBadge>1</CountBadge></Tool>
            </ToolGroup>
          </Toolbar>
        </TitleRow>
      </TitleArea>
      <Body>
        <Palette>
          <PaletteGroup title="CARDS" items={cards} closable />
          <PaletteGroup title="ELEMENTS" items={elements} />
        </Palette>
        <Editor>
          <SectionBlock title="PPE &amp; Safety" />
          <SectionBlock title="Quality Checks" open>
            <Card>
              <CardKind><TableEntryIcon w={27} /></CardKind>
              <Logo />
              <FormPrompt htmlFor="editor-vin">
                Enter or Scan the Vehicle Identification Number or QR Code to proceed:
              </FormPrompt>
              <VinInput id="editor-vin" placeholder="Enter/Scan VIN" />
              <GuidanceBlock />
              <FormTable groups={[inspection, brakes]} />
            </Card>
          </SectionBlock>
        </Editor>
        <Scroller><Thumb /></Scroller>
      </Body>
    </Workspace>
  </Desktop>
);

const stepsDone = 133;
const stepsTotal = 200;

const TabletApp = () => (
  <Tablet>
    <Screen>
      <StatusBar>
        <span>QA01 - DRIVETRAIN QUALITY CHECK SHEET</span>
        <div>
          <OfflineCallIcon />
          <Dark><WifiIcon /></Dark>
        </div>
      </StatusBar>
      <Progress><div style={{ width: `${(stepsDone / stepsTotal) * 100}%` }} /></Progress>
      <Sheet>
        <BrandRow>
          <Logo compact />
          <CheckBadge />
        </BrandRow>
        <FormPrompt $compact htmlFor="tablet-vin">
          Enter or Scan the Vehicle Identification Number to proceed:
        </FormPrompt>
        <VinBand>
          <VinField id="tablet-vin" placeholder="Enter/Scan VIN" />
          <ScanButton aria-label="Scan"><ScannerIcon /></ScanButton>
        </VinBand>
        <GuidanceBlock compact />
        <FormTable compact groups={[inspection, brakes, fluids]} />
      </Sheet>
      <Signoff>
        <h3>Signoff and Additional Comments</h3>
        <SignRow>
          <SignButton>SIGN</SignButton>
          <RequiredMark $top={9} $left={92}><StarMark size={14} /></RequiredMark>
          <Comments placeholder="Comments" aria-label="Comments" />
          <MediaButton aria-label="Take photo"><FaCamera size={20} /></MediaButton>
          <MediaButton aria-label="Record video"><FaVideo size={22} /></MediaButton>
          <RequiredMark $top={9} $right={4}><StarMark size={14} /></RequiredMark>
        </SignRow>
      </Signoff>
      <StepNav>
        <StepButton $kind="prev" aria-label="Previous"><ChevronIcon dir="left" w={11} /></StepButton>
        <StepButton $kind="menu" aria-label="Menu">
          <Line w={18} h={16} sw={2}><path d="M1 2h16M1 8h16M1 14h16" /></Line>
        </StepButton>
        <StepButton $kind="next" aria-label="Next"><ChevronIcon dir="right" w={11} /></StepButton>
      </StepNav>
    </Screen>
  </Tablet>
);

export default function App() {
  return (
    <Scene>
      <GlobalStyle />
      <DesktopApp />
      <TabletApp />
    </Scene>
  );
}
